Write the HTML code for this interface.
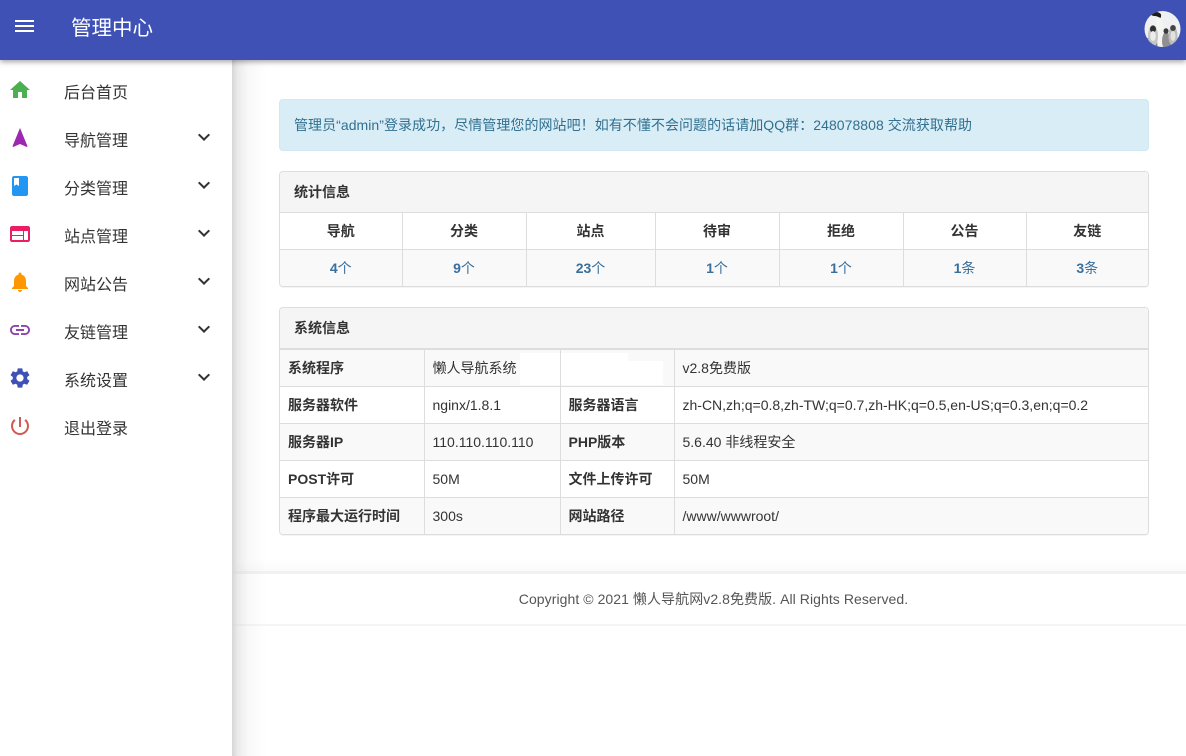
<!DOCTYPE html>
<html lang="zh-CN">
<head>
<meta charset="utf-8">
<title>管理中心</title>
<style>
*{box-sizing:border-box}
html,body{margin:0;padding:0;width:1186px;height:756px;overflow:hidden;background:#fff;font-family:"Liberation Sans","Noto Sans CJK SC",sans-serif;font-size:14px;color:#333}
.abs{position:absolute}
#hdr{left:0;top:0;width:1186px;height:60px;background:#3f51b5;box-shadow:0 2px 5px rgba(0,0,0,.35);z-index:5}
#hdr .t{position:absolute;left:71px;top:14px;font-size:20.500px;line-height:30px;color:#fff}
#hdr i{position:absolute;left:15px;width:19px;height:2px;background:#fff}
#side{left:0;top:60px;width:232px;height:696px;background:#fff;z-index:3}
#sg{left:232px;top:60px;width:34px;height:696px;background:linear-gradient(to right,#d6d6d6 0,rgba(200,200,200,.36) 6px,rgba(200,200,200,.12) 16px,rgba(255,255,255,0) 34px);z-index:2}
.it{position:absolute;left:0;width:232px;height:48px}
.it svg.ic{position:absolute;left:8px;top:6px;width:24px;height:24px}
.it svg.ch{position:absolute;left:192px;top:5px;width:24px;height:24px}
.it span{position:absolute;left:64px;top:6px;font-size:16px;line-height:32px;color:#333}
.alert{left:279px;top:99px;width:870px;height:52px;background:#d9edf7;border:1px solid #cfe8f1;border-radius:4px;color:#31708f;padding:0 14px;line-height:50px;white-space:nowrap;letter-spacing:.05px;z-index:1}
.panel{left:279px;width:870px;background:#fff;border:1px solid #ddd;border-radius:4px;box-shadow:0 1px 1px rgba(0,0,0,.05);overflow:hidden;z-index:1}
.ph{height:41px;background:#f5f5f5;border-bottom:1px solid #ddd;padding:0 14px;line-height:40px;font-weight:bold;color:#333}
table{border-collapse:collapse;table-layout:fixed;width:868px;position:relative}
td,th{border:1px solid #ddd;padding:0;height:37px;line-height:36px;white-space:nowrap}
tr:first-child td,tr:first-child th{border-top:0;height:36px}
tr td:first-child,tr th:first-child{border-left:0}
tr td:last-child,tr th:last-child{border-right:0}
tr:last-child td{border-bottom:0}
.s td,.s th{text-align:center}
.s th{font-weight:bold;color:#333}
.s .v{background:#f9f9f9;color:#3a6f9b}
.s .v b{font-weight:bold}
.y td{padding-left:8px;color:#333}
.y tr.st td{background:#f9f9f9}
.y td.b{font-weight:bold;color:#333}
#foot{left:232px;top:571px;width:954px;height:55px;background:#fff;border-top:3px solid #f1f1f1;border-bottom:2px solid #f5f5f5;text-align:center;color:#555;line-height:50px;padding-left:9px;letter-spacing:.065px;z-index:1}
#fg{left:232px;top:559px;width:954px;height:12px;background:linear-gradient(to bottom,#fff,#fafafa);z-index:0}
</style>
</head>
<body>
<div id="hdr" class="abs">
  <i style="top:20px"></i><i style="top:25px"></i><i style="top:30px"></i>
  <div class="t">管理中心</div>
  <svg class="abs" style="left:1144px;top:11px" width="37" height="36" viewBox="0 0 36 36">
    <defs><clipPath id="c"><circle cx="18" cy="18" r="18"/></clipPath></defs>
    <g clip-path="url(#c)">
      <rect width="36" height="36" fill="#eef0f2"/>
      <rect y="27" width="36" height="9" fill="#777"/>
      <path d="M11 5c3-1 5 1 6 4 2 4 3 10 3 16l-1 11h-6l-1-13c0-6 0-12-1-18z" fill="#f4f4f2"/>
      <path d="M5 3c2-2 7-3 10-1 2 1 2 3 1 5-2-1-4-2-6-2-2 0-3-1-5-2z" fill="#1c1c1c"/>
      <ellipse cx="8.500" cy="25" rx="5" ry="11" fill="#c6c6c4"/>
      <ellipse cx="8.500" cy="18" rx="3" ry="3.500" fill="#303030"/>
      <ellipse cx="8.500" cy="25" rx="2.800" ry="5" fill="#ececea"/>
      <ellipse cx="21.500" cy="30" rx="4" ry="9" fill="#909090"/>
      <ellipse cx="21.500" cy="20" rx="2.500" ry="2.800" fill="#3a3a3a"/>
      <ellipse cx="28.500" cy="25" rx="4.500" ry="10" fill="#bcbcba"/>
      <ellipse cx="28.500" cy="17" rx="2.800" ry="3" fill="#444"/>
      <ellipse cx="28.500" cy="25" rx="2.500" ry="5" fill="#e2e2e0"/>
    </g>
  </svg>
</div>

<div id="side" class="abs">
  <div class="it" style="top:12px"><svg class="ic" viewBox="0 0 24 24"><path fill="#4caf50" d="M10 20v-6h4v6h5v-8h3L12 3 2 12h3v8z"/></svg><span>后台首页</span></div>
  <div class="it" style="top:60px"><svg class="ic" viewBox="0 0 24 24"><path fill="#9c27b0" d="M12 2L4.500 20.290l.71.71L12 18l6.790 3 .71-.71z"/></svg><span>导航管理</span><svg class="ch" viewBox="0 0 24 24"><path fill="#333" d="M7.410 8.590L12 13.170l4.590-4.580L18 10l-6 6-6-6z"/></svg></div>
  <div class="it" style="top:108px"><svg class="ic" viewBox="0 0 24 24"><path fill="#2196f3" d="M18 2H6c-1.100 0-2 .9-2 2v16c0 1.100.9 2 2 2h12c1.100 0 2-.9 2-2V4c0-1.100-.9-2-2-2zM6 4h5v8l-2.500-1.500L6 12V4z"/></svg><span>分类管理</span><svg class="ch" viewBox="0 0 24 24"><path fill="#333" d="M7.410 8.590L12 13.170l4.590-4.580L18 10l-6 6-6-6z"/></svg></div>
  <div class="it" style="top:156px"><svg class="ic" viewBox="0 0 24 24"><path fill="#e91e63" d="M20 4H4c-1.100 0-2 .9-2 2v12c0 1.100.9 2 2 2h16c1.100 0 2-.9 2-2V6c0-1.100-.9-2-2-2zm-5 14H4v-4h11v4zm0-5H4V9h11v4zm5 5h-4V9h4v9z"/></svg><span>站点管理</span><svg class="ch" viewBox="0 0 24 24"><path fill="#333" d="M7.410 8.590L12 13.170l4.590-4.580L18 10l-6 6-6-6z"/></svg></div>
  <div class="it" style="top:204px"><svg class="ic" viewBox="0 0 24 24"><path fill="#ff9800" d="M12 22c1.100 0 2-.9 2-2h-4c0 1.100.9 2 2 2zm6-6v-5c0-3.070-1.630-5.640-4.500-6.320V4c0-.83-.67-1.500-1.500-1.500s-1.500.67-1.500 1.500v.68C7.640 5.360 6 7.920 6 11v5l-2 2v1h16v-1l-2-2z"/></svg><span>网站公告</span><svg class="ch" viewBox="0 0 24 24"><path fill="#333" d="M7.410 8.590L12 13.170l4.590-4.580L18 10l-6 6-6-6z"/></svg></div>
  <div class="it" style="top:252px"><svg class="ic" viewBox="0 0 24 24"><path fill="#8e44ad" d="M3.900 12c0-1.710 1.390-3.100 3.100-3.100h4V7H7c-2.760 0-5 2.240-5 5s2.240 5 5 5h4v-1.900H7c-1.710 0-3.100-1.390-3.100-3.100zM8 13h8v-2H8v2zm9-6h-4v1.900h4c1.710 0 3.100 1.390 3.100 3.100s-1.390 3.100-3.100 3.100h-4V17h4c2.760 0 5-2.240 5-5s-2.240-5-5-5z"/></svg><span>友链管理</span><svg class="ch" viewBox="0 0 24 24"><path fill="#333" d="M7.410 8.590L12 13.170l4.590-4.580L18 10l-6 6-6-6z"/></svg></div>
  <div class="it" style="top:300px"><svg class="ic" viewBox="0 0 24 24"><path fill="#3f51b5" d="M19.140 12.940c.04-.3.060-.61.060-.94 0-.32-.02-.64-.07-.94l2.030-1.580c.18-.14.230-.41.120-.61l-1.920-3.320c-.12-.22-.37-.29-.59-.22l-2.390.96c-.5-.38-1.030-.7-1.620-.94l-.36-2.540c-.04-.24-.24-.41-.48-.41h-3.840c-.24 0-.43.170-.47.410l-.36 2.540c-.59.240-1.130.57-1.620.94l-2.390-.96c-.22-.08-.47 0-.59.220L2.740 8.870c-.12.210-.08.470.12.610l2.030 1.580c-.05.3-.09.630-.09.940s.02.640.07.940l-2.030 1.580c-.18.140-.23.410-.12.610l1.920 3.320c.12.220.37.290.59.220l2.390-.96c.5.380 1.030.7 1.620.94l.36 2.540c.05.240.24.410.48.410h3.840c.24 0 .44-.17.47-.41l.36-2.540c.59-.24 1.130-.56 1.620-.94l2.390.96c.22.080.47 0 .59-.22l1.920-3.320c.12-.22.070-.47-.12-.61l-2.010-1.580zM12 15.600c-1.980 0-3.600-1.620-3.600-3.600s1.620-3.600 3.600-3.600 3.600 1.620 3.600 3.600-1.620 3.600-3.600 3.600z"/></svg><span>系统设置</span><svg class="ch" viewBox="0 0 24 24"><path fill="#333" d="M7.410 8.590L12 13.170l4.590-4.580L18 10l-6 6-6-6z"/></svg></div>
  <div class="it" style="top:348px"><svg class="ic" viewBox="0 0 24 24"><path fill="#d05a55" d="M13 3h-2v10h2V3zm4.830 2.170l-1.420 1.420C17.990 7.860 19 9.810 19 12c0 3.870-3.130 7-7 7s-7-3.130-7-7c0-2.190 1.010-4.140 2.580-5.420L6.170 5.170C4.230 6.820 3 9.260 3 12c0 4.970 4.030 9 9 9s9-4.030 9-9c0-2.740-1.230-5.180-3.170-6.830z"/></svg><span>退出登录</span></div>
</div>
<div id="sg" class="abs"></div>

<div class="abs alert">管理员“admin”登录成功，尽情管理您的网站吧！如有不懂不会问题的话请加QQ群：248078808 交流获取帮助</div>

<div class="abs panel" style="top:171px;height:116px">
  <div class="ph">统计信息</div>
  <table class="s">
    <colgroup><col style="width:122px"><col style="width:124px"><col style="width:129px"><col style="width:124px"><col style="width:124px"><col style="width:123px"><col></colgroup>
    <tr><th>导航</th><th>分类</th><th>站点</th><th>待审</th><th>拒绝</th><th>公告</th><th>友链</th></tr>
    <tr><td class="v"><b>4</b>个</td><td class="v"><b>9</b>个</td><td class="v"><b>23</b>个</td><td class="v"><b>1</b>个</td><td class="v"><b>1</b>个</td><td class="v"><b>1</b>条</td><td class="v"><b>3</b>条</td></tr>
  </table>
</div>

<div class="abs panel" style="top:307px;height:228px">
  <div class="ph" style="height:42px;border-bottom:2px solid #ddd">系统信息</div>
  <table class="y">
    <colgroup><col style="width:144px"><col style="width:136px"><col style="width:114px"><col></colgroup>
    <tr class="st"><td class="b">系统程序</td><td>懒人导航系统</td><td></td><td>v2.8免费版</td></tr>
    <tr><td class="b">服务器软件</td><td>nginx/1.8.1</td><td class="b">服务器语言</td><td>zh-CN,zh;q=0.8,zh-TW;q=0.7,zh-HK;q=0.5,en-US;q=0.3,en;q=0.2</td></tr>
    <tr class="st"><td class="b">服务器IP</td><td>110.110.110.110</td><td class="b">PHP版本</td><td>5.6.40 非线程安全</td></tr>
    <tr><td class="b">POST许可</td><td>50M</td><td class="b">文件上传许可</td><td>50M</td></tr>
    <tr class="st"><td class="b">程序最大运行时间</td><td>300s</td><td class="b">网站路径</td><td>/www/wwwroot/</td></tr>
  </table>
  <div class="abs" style="left:240px;top:45px;width:40px;height:32px;background:#fff"></div>
  <div class="abs" style="left:281px;top:45px;width:67px;height:32px;background:#fff"></div>
  <div class="abs" style="left:348px;top:53px;width:35px;height:24px;background:#fff"></div>
</div>

<div id="fg" class="abs"></div>
<div id="foot" class="abs">Copyright © 2021 懒人导航网v2.8免费版. All Rights Reserved.</div>
</body>
</html>
